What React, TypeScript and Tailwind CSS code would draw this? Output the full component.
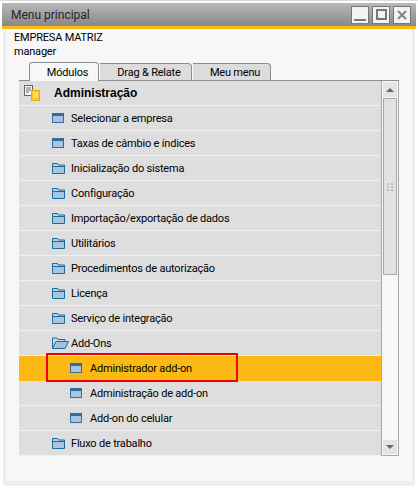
import { ReactNode } from "react";

function WindowIcon() {
  return (
    <svg width="12" height="10" viewBox="0 0 12 10" className="shrink-0">
      <rect x="0" y="0" width="12" height="10" fill="#336c9e" />
      <rect x="1" y="3" width="10" height="6" fill="#a9c4e2" />
    </svg>
  );
}

function FolderIcon() {
  return (
    <svg width="13" height="11" viewBox="0 0 13 11" className="shrink-0">
      <path d="M0.5 10.5V0.5H5.5L6.5 2H12.5V10.5Z" fill="#b7d3ea" stroke="#1b6c9c" />
      <rect x="1" y="3" width="11" height="1" fill="#1b6c9c" />
      <rect x="1" y="4" width="11" height="6" fill="#a8c6e0" />
    </svg>
  );
}

function OpenFolderIcon() {
  return (
    <svg width="17" height="12" viewBox="0 0 17 12" className="shrink-0">
      <path d="M0.5 11.5V1H5L6 2.5H13V4.5" fill="#c4dbee" stroke="#1b6c9c" />
      <path d="M0.5 11.5L4 4.5H16.5L13 11.5Z" fill="#a3c2dd" stroke="#1b6c9c" />
    </svg>
  );
}

function AdminIcon() {
  return (
    <svg width="16" height="16" viewBox="0 0 16 16" className="shrink-0">
      <rect x="0.5" y="0.5" width="8" height="10" fill="#f7f7f7" stroke="#666" />
      <path d="M2 3h5M2 5h5M2 7h3" stroke="#666" />
      <rect x="7.5" y="5.5" width="8" height="10" fill="#fdc51f" stroke="#f5a800" />
      <path d="M9 8h5M9 10h5M9 12h5" stroke="#fff3c4" />
    </svg>
  );
}

function Row({ icon, indent, children, active }: { icon: ReactNode; indent: string; children: ReactNode; active?: boolean }) {
  return (
    <div className={`h-[25px] shrink-0 flex items-center border-b ${indent} ${active ? "bg-[#fdb913] border-[#fdb913] relative" : "bg-[#dedede] border-[#f0f0f0]"}`}>
      {icon}
      <span className="pt-[2px]">{children}</span>
      {active && <div className="absolute left-[27px] top-[-3px] w-[192px] h-[29px] border-2 border-[#f00000]" />}
    </div>
  );
}

function Tab({ label, width, active }: { label: string; width: string; active?: boolean }) {
  return (
    <div
      className={`${width} flex items-center justify-center pl-[7px] pt-[2px] rounded-tr-[4px] border-t border-r border-[#8e8e8e] ${
        active ? "h-[19px] bg-[#f7f7f7] border-l rounded-tl-[3px] relative -mb-px z-10" : "h-[17px] bg-[#dcdcdc] ml-px"
      }`}
    >
      {label}
    </div>
  );
}

function ScrollBar() {
  return (
    <div className="w-[18px] h-[375px] shrink-0 border-x border-b border-[#a8a8a8] bg-[#f7f7f7] flex flex-col items-center">
      <div className="w-[14px] h-[15px] mt-[1px] bg-[#e4e4e4] flex items-center justify-center">
        <div className="w-0 h-0 border-x-[4px] border-x-transparent border-b-[4px] border-b-[#666]" />
      </div>
      <div className="w-[14px] h-[177px] mt-px bg-[#e2e2e2] border border-[#a8a8a8] flex items-center justify-center">
        <div className="grid grid-cols-2 gap-x-[2px] gap-y-[1px]">
          {[0, 1, 2, 3, 4, 5].map((i) => (
            <div key={i} className="w-[2px] h-[2px] bg-[#bcbcbc]" />
          ))}
        </div>
      </div>
      <div className="flex-1" />
      <div className="w-[14px] h-[14px] mb-px bg-[#e4e4e4] flex items-center justify-center">
        <div className="w-0 h-0 border-x-[4px] border-x-transparent border-t-[4px] border-t-[#666]" />
      </div>
    </div>
  );
}

export default function App() {
  return (
    <div className="w-[418px] h-[488px] bg-white overflow-hidden text-[11px] tracking-[-0.2px] text-black font-['Roboto','Liberation_Sans',sans-serif]">
      <div className="h-px bg-[#dddddd]" />
      <div className="w-[414px] ml-[2px] mt-[2px] flex flex-col">
        <div className="h-[23px] shrink-0 bg-gradient-to-b from-[#b9b9b9] to-[#888888] flex items-center justify-between pl-[9px] pr-[5px]">
          <span className="text-[12px] tracking-normal text-[#2b2030]">Menu principal</span>
          <div className="flex gap-[3px]">
            <div className="w-[18px] h-[18px] bg-[#f3f3f3] border border-[#777] flex items-end justify-center pb-[2px]">
              <div className="w-[12px] h-[2px] bg-[#777]" />
            </div>
            <div className="w-[18px] h-[18px] bg-[#f3f3f3] border border-[#777] flex items-center justify-center">
              <div className="w-[11px] h-[11px] border-2 border-[#777]" />
            </div>
            <div className="w-[18px] h-[18px] bg-[#f3f3f3] border border-[#777] flex items-center justify-center">
              <svg width="10" height="10" viewBox="0 0 10 10">
                <path d="M1 1L9 9M9 1L1 9" stroke="#888" strokeWidth="2.2" />
              </svg>
            </div>
          </div>
        </div>
        <div className="h-[3px] shrink-0 bg-[#fdb913]" />
        <div className="mx-px bg-[#eeeeee] px-[3px] pb-[5px]">
          <div className="h-[452px] bg-[#f7f7f7]">
            <div className="pl-[8px] pt-[2px] h-[16px] flex items-center">EMPRESA MATRIZ</div>
            <div className="pl-[8px] h-[14px] flex items-center">manager</div>
            <div className="ml-[23px] mt-[2px] h-[19px] flex items-end">
              <Tab label="Módulos" width="w-[70px]" active />
              <Tab label="Drag & Relate" width="w-[92px]" />
              <Tab label="Meu menu" width="w-[78px]" />
            </div>
            <div className="ml-[13px] w-[380px] border-t border-[#8e8e8e] flex">
              <div className="flex-1 flex flex-col">
                <div className="h-[25px] flex items-center bg-[#dedede] border-b border-[#f0f0f0] pl-[5px]">
                  <div className="w-[30px] flex shrink-0">
                    <AdminIcon />
                  </div>
                  <span className="font-bold text-[12px] tracking-normal font-['Liberation_Sans',sans-serif]">Administração</span>
                </div>
                <Row indent="pl-[33px] gap-[7px]" icon={<WindowIcon />}>Selecionar a empresa</Row>
                <Row indent="pl-[33px] gap-[7px]" icon={<WindowIcon />}>Taxas de câmbio e índices</Row>
                <Row indent="pl-[33px] gap-[6px]" icon={<FolderIcon />}>Inicialização do sistema</Row>
                <Row indent="pl-[33px] gap-[6px]" icon={<FolderIcon />}>Configuração</Row>
                <Row indent="pl-[33px] gap-[6px]" icon={<FolderIcon />}>Importação/exportação de dados</Row>
                <Row indent="pl-[33px] gap-[6px]" icon={<FolderIcon />}>Utilitários</Row>
                <Row indent="pl-[33px] gap-[6px]" icon={<FolderIcon />}>Procedimentos de autorização</Row>
                <Row indent="pl-[33px] gap-[6px]" icon={<FolderIcon />}>Licença</Row>
                <Row indent="pl-[33px] gap-[6px]" icon={<FolderIcon />}>Serviço de integração</Row>
                <Row indent="pl-[33px] gap-[2px]" icon={<OpenFolderIcon />}>Add-Ons</Row>
                <Row indent="pl-[51px] gap-[8px]" icon={<WindowIcon />} active>Administrador add-on</Row>
                <Row indent="pl-[51px] gap-[8px]" icon={<WindowIcon />}>Administração de add-on</Row>
                <Row indent="pl-[51px] gap-[8px]" icon={<WindowIcon />}>Add-on do celular</Row>
                <Row indent="pl-[33px] gap-[6px]" icon={<FolderIcon />}>Fluxo de trabalho</Row>
              </div>
              <ScrollBar />
            </div>
          </div>
        </div>
      </div>
    </div>
  );
}
